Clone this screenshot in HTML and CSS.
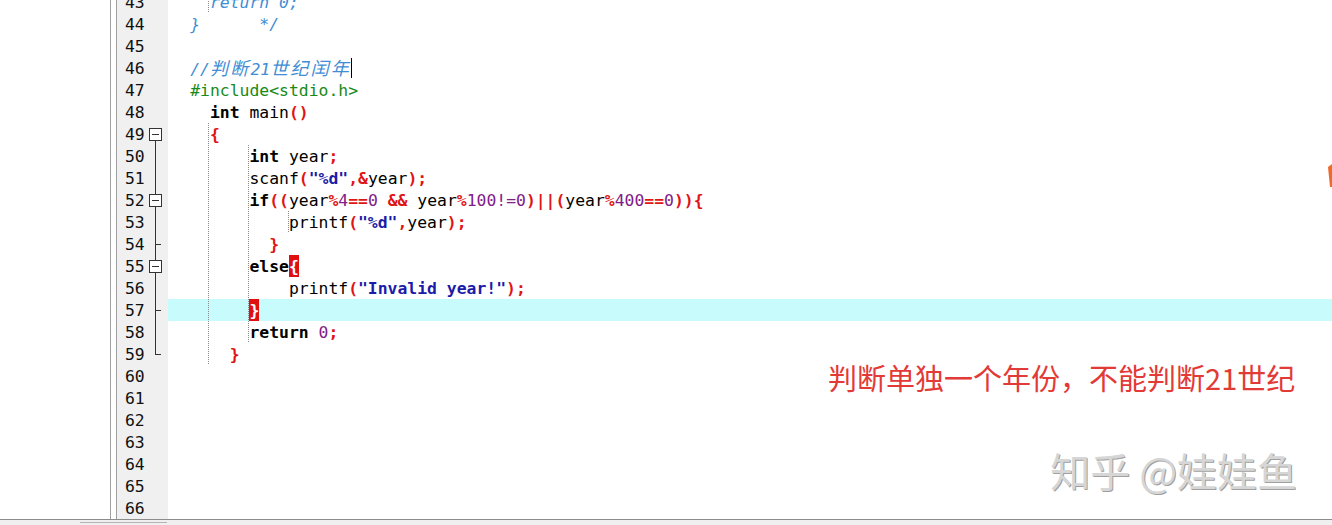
FILE: index.html
```html
<!DOCTYPE html>
<html lang="zh">
<head>
<meta charset="utf-8">
<title>Dev-C++</title>
<link rel="stylesheet" href="styles.css">
</head>
<body>
<div class="window">
  <div class="main">
    <div class="side"></div>
    <div class="sep"></div>
    <div class="editor">
      <div class="lines">
        <div class="row"><div class="gut"><span class="num">43</span><span class="fold"></span></div><div class="code ga">    <span class="cm">return 0;</span></div></div>
        <div class="row"><div class="gut"><span class="num">44</span><span class="fold"></span></div><div class="code">  <span class="cm">}      */</span></div></div>
        <div class="row"><div class="gut"><span class="num">45</span><span class="fold"></span></div><div class="code"></div></div>
        <div class="row"><div class="gut"><span class="num">46</span><span class="fold"></span></div><div class="code">  <span class="cm">//<span class="wide">判断</span>21<span class="wide">世纪闰年</span></span><span class="caret"></span></div></div>
        <div class="row"><div class="gut"><span class="num">47</span><span class="fold"></span></div><div class="code">  <span class="pp">#include&lt;stdio.h&gt;</span></div></div>
        <div class="row"><div class="gut"><span class="num">48</span><span class="fold"></span></div><div class="code">    <span class="kw">int</span> main<span class="sy">()</span></div></div>
        <div class="row"><div class="gut"><span class="num">49</span><span class="fold b first"></span></div><div class="code ga">    <span class="sy">{</span></div></div>
        <div class="row"><div class="gut"><span class="num">50</span><span class="fold v"></span></div><div class="code gab">        <span class="kw">int</span> year<span class="sy">;</span></div></div>
        <div class="row"><div class="gut"><span class="num">51</span><span class="fold v"></span></div><div class="code gab">        scanf<span class="sy">(</span><span class="st">"%d"</span><span class="sy">,&amp;</span>year<span class="sy">);</span></div></div>
        <div class="row"><div class="gut"><span class="num">52</span><span class="fold b v"></span></div><div class="code gab">        <span class="kw">if</span><span class="sy">((</span>year<span class="sy">%</span><span class="nu">4</span><span class="sy">==</span><span class="nu">0</span> <span class="sy">&amp;&amp;</span> year<span class="sy">%</span><span class="nu">100!=0</span><span class="sy">)||(</span>year<span class="sy">%</span><span class="nu">400</span><span class="sy">==</span><span class="nu">0</span><span class="sy">)){</span></div></div>
        <div class="row"><div class="gut"><span class="num">53</span><span class="fold v"></span></div><div class="code gabc">            printf<span class="sy">(</span><span class="st">"%d"</span><span class="sy">,</span>year<span class="sy">);</span></div></div>
        <div class="row"><div class="gut"><span class="num">54</span><span class="fold v t"></span></div><div class="code gab">          <span class="sy">}</span></div></div>
        <div class="row"><div class="gut"><span class="num">55</span><span class="fold b v"></span></div><div class="code gab">        <span class="kw">else</span><span class="br">{</span></div></div>
        <div class="row"><div class="gut"><span class="num">56</span><span class="fold v"></span></div><div class="code gab">            printf<span class="sy">(</span><span class="st">"Invalid year!"</span><span class="sy">);</span></div></div>
        <div class="row"><div class="gut"><span class="num">57</span><span class="fold v t"></span></div><div class="code gab cur">        <span class="br">}</span></div></div>
        <div class="row"><div class="gut"><span class="num">58</span><span class="fold v"></span></div><div class="code gab">        <span class="kw">return</span> <span class="nu">0</span><span class="sy">;</span></div></div>
        <div class="row"><div class="gut"><span class="num">59</span><span class="fold e"></span></div><div class="code ga">      <span class="sy">}</span></div></div>
        <div class="row"><div class="gut"><span class="num">60</span><span class="fold"></span></div><div class="code"></div></div>
        <div class="row"><div class="gut"><span class="num">61</span><span class="fold"></span></div><div class="code"></div></div>
        <div class="row"><div class="gut"><span class="num">62</span><span class="fold"></span></div><div class="code"></div></div>
        <div class="row"><div class="gut"><span class="num">63</span><span class="fold"></span></div><div class="code"></div></div>
        <div class="row"><div class="gut"><span class="num">64</span><span class="fold"></span></div><div class="code"></div></div>
        <div class="row"><div class="gut"><span class="num">65</span><span class="fold"></span></div><div class="code"></div></div>
        <div class="row"><div class="gut"><span class="num">66</span><span class="fold"></span></div><div class="code"></div></div>
      </div>
    </div>
  </div>
  <div class="status"><div class="tab"></div></div>
  <div class="note">判断单独一个年份<span class="comma">，</span>不能判断21世纪</div>
  <div class="mark">知乎 @娃娃鱼</div>
  <svg class="orange" width="6" height="24" viewBox="0 0 6 24"><polygon points="2,3 6,0 6,23 4,23" fill="#ee6a2a"/></svg>
</div>
</body>
</html>
```

FILE: styles.css
```css
html, body {
  margin: 0;
  padding: 0;
  background: #fff;
}

.window {
  position: relative;
  width: 1332px;
  height: 525px;
  overflow: hidden;
  display: flex;
  flex-direction: column;
  background: #fff;
}

.main {
  display: flex;
  height: 520px;
  box-sizing: border-box;
  border-bottom: 1px solid #8c8c8c;
  flex: none;
}

.side {
  width: 111px;
  box-sizing: border-box;
  border-right: 1px solid #a0a0a0;
  flex: none;
}

.sep {
  width: 6px;
  box-sizing: border-box;
  border-right: 1px solid #a0a0a0;
  flex: none;
}

.editor {
  flex: 1;
  overflow: hidden;
}

.lines {
  margin-top: -9px;
}

.row {
  display: flex;
  height: 22px;
  font-family: "DejaVu Sans Mono", "Noto Sans CJK SC", monospace;
  font-size: 16.4px;
  line-height: 23px;
  color: #000;
}

.gut {
  width: 51px;
  flex: none;
  background: #f0f0f0;
  display: flex;
}

.num {
  width: 33px;
  box-sizing: border-box;
  padding-left: 8px;
  color: #111;
}

.fold {
  width: 12px;
  position: relative;
}

.fold.v::before,
.fold.e::before,
.fold.b.first::before {
  content: "";
  position: absolute;
  left: 5px;
  width: 1px;
  background: #333;
}

.fold.v::before {
  top: 0;
  bottom: 0;
}

.fold.e::before {
  top: 0;
  height: 12px;
}

.fold.b.first::before {
  top: 12px;
  bottom: 0;
}

.fold.t::after,
.fold.e::after {
  content: "";
  position: absolute;
  left: 5px;
  top: 11px;
  width: 6px;
  height: 1px;
  background: #333;
}

.fold.b::after {
  content: "";
  position: absolute;
  left: -1px;
  top: 5px;
  width: 13px;
  height: 13px;
  box-sizing: border-box;
  border: 1px solid #333;
  background: linear-gradient(#333, #333) center / 7px 1px no-repeat, #fff;
}

.code {
  flex: 1;
  padding-left: 2.5px;
  white-space: pre;
  background-repeat: repeat-y;
}

.code.ga {
  background-image: linear-gradient(#8a8a8a 50%, transparent 50%);
  background-size: 1px 2px;
  background-position: 40px 0;
}

.code.gab {
  background-image: linear-gradient(#8a8a8a 50%, transparent 50%), linear-gradient(#8a8a8a 50%, transparent 50%);
  background-size: 1px 2px, 1px 2px;
  background-position: 40px 0, 80px 0;
}

.code.gabc {
  background-image: linear-gradient(#8a8a8a 50%, transparent 50%), linear-gradient(#8a8a8a 50%, transparent 50%), linear-gradient(#8a8a8a 50%, transparent 50%);
  background-size: 1px 2px, 1px 2px, 1px 2px;
  background-position: 40px 0, 80px 0, 120px 0;
}

.code.cur {
  background-color: #c8fbfb;
}

.kw {
  font-weight: bold;
  color: #000;
}

.sy {
  font-weight: bold;
  color: #e01414;
}

.nu {
  color: #80208a;
}

.st {
  font-weight: bold;
  color: #1c1ca8;
}

.pp {
  color: #178a17;
}

.cm {
  font-style: italic;
  color: #3f8dd4;
}

.wide {
  font-size: 18px;
  letter-spacing: 2.2px;
}

.caret {
  display: inline-block;
  width: 0;
  height: 20px;
  border-left: 1px solid #000;
  vertical-align: top;
  margin-top: 1px;
}

.br {
  display: inline-block;
  height: 22px;
  vertical-align: top;
  background: #e01010;
  color: #fff;
  font-weight: bold;
  line-height: 23px;
}

.status {
  height: 5px;
  background: #f0f0f0;
  flex: none;
}

.tab {
  margin-left: 80px;
  margin-top: 2px;
  width: 87px;
  height: 1px;
  background: #b4b4b4;
}

.note {
  position: absolute;
  left: 828px;
  top: 363px;
  font-family: "Noto Sans CJK SC", sans-serif;
  font-size: 29px;
  line-height: 1;
  color: #e23a36;
  white-space: nowrap;
}

.comma {
  font-family: "Noto Sans CJK TC", "Noto Sans CJK SC", sans-serif;
}

.mark {
  position: absolute;
  right: 35px;
  top: 450px;
  font-family: "Noto Sans CJK SC", sans-serif;
  font-size: 40px;
  line-height: 1;
  color: #d6d6d6;
  text-shadow: 1px 1px 0 #a0a0a0;
  white-space: nowrap;
}

.orange {
  position: absolute;
  left: 1326px;
  top: 164px;
}
```
